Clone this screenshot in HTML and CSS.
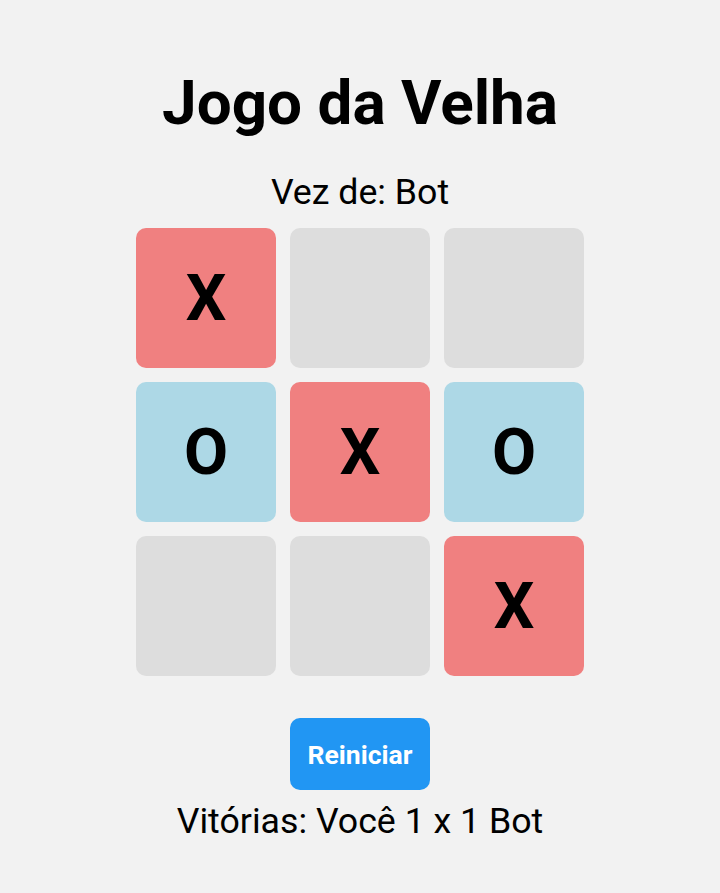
FILE: index.html
```html
<!DOCTYPE html>
<html lang="pt">
<head>
<meta charset="utf-8">
<title>Jogo da Velha</title>
<link rel="stylesheet" href="styles.css">
</head>
<body>
<main class="game">
  <h1 class="title">Jogo da Velha</h1>
  <div class="status">Vez de: Bot</div>
  <div class="board">
    <div class="cell x">X</div>
    <div class="cell"></div>
    <div class="cell"></div>
    <div class="cell o">O</div>
    <div class="cell x">X</div>
    <div class="cell o">O</div>
    <div class="cell"></div>
    <div class="cell"></div>
    <div class="cell x">X</div>
  </div>
  <button class="reset">Reiniciar</button>
  <div class="score">Vitórias: Você 1 x 1 Bot</div>
</main>
</body>
</html>
```

FILE: styles.css
```css
html, body {
  margin: 0;
  padding: 0;
  background: #f2f2f2;
}
body {
  font-family: Roboto, "Noto Sans", sans-serif;
  color: #000;
}
.game {
  display: flex;
  flex-direction: column;
  align-items: center;
  padding-top: 65px;
}
.title {
  margin: 0;
  font-size: 62px;
  line-height: 76px;
  font-weight: 700;
}
.status {
  margin-top: 30px;
  font-size: 35.7px;
  line-height: 42px;
  font-weight: 400;
}
.board {
  margin-top: 15px;
  display: grid;
  grid-template-columns: repeat(3, 140px);
  grid-auto-rows: 140px;
  gap: 14px;
}
.cell {
  background: #dddddd;
  border-radius: 10px;
  display: flex;
  align-items: center;
  justify-content: center;
  font-size: 64px;
  font-weight: 700;
}
.cell.x { background: #f08080; }
.cell.o { background: #add8e6; }
.reset {
  margin-top: 42px;
  height: 72px;
  padding: 0 18px;
  border: none;
  border-radius: 10px;
  background: #2196f3;
  color: #fff;
  font-family: Roboto, "Noto Sans", sans-serif;
  font-size: 26.5px;
  font-weight: 700;
}
.score {
  margin-top: 10px;
  font-size: 35.7px;
  line-height: 42px;
  font-weight: 400;
}
```
